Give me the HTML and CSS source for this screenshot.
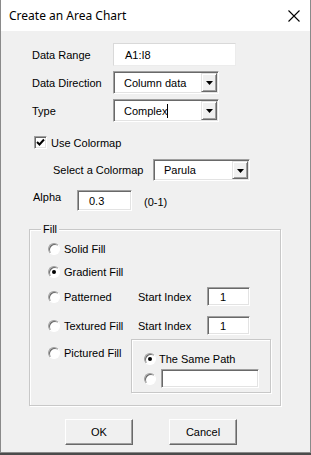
FILE: index.html
```html
<!DOCTYPE html>
<html lang="en">
<head>
    <meta charset="UTF-8">
    <title>Create an Area Chart</title>
    <link rel="stylesheet" href="styles.css">
</head>
<body>
    <div class="window">
        <div class="titlebar">
            <span class="title">Create an Area Chart</span>
            <svg class="close" width="12" height="12" viewBox="0 0 12 12">
                <path d="M0.5 0.5 L11.5 11.5 M11.5 0.5 L0.5 11.5" stroke="#000" stroke-width="1.1" fill="none"/>
            </svg>
        </div>

        <div class="row first">
            <span class="lbl">Data Range</span>
            <div class="edit flat range">A1:I8</div>
        </div>
        <div class="row gap5">
            <span class="lbl">Data Direction</span>
            <div class="combo dir">
                <span class="combo-text">Column data</span>
                <span class="drop"><svg width="7" height="4" viewBox="0 0 7 4"><polygon points="0,0 7,0 3.5,4" fill="#000"/></svg></span>
            </div>
        </div>
        <div class="row gap5">
            <span class="lbl">Type</span>
            <div class="combo dir">
                <span class="combo-text">Complex<span class="caret"></span></span>
                <span class="drop"><svg width="7" height="4" viewBox="0 0 7 4"><polygon points="0,0 7,0 3.5,4" fill="#000"/></svg></span>
            </div>
        </div>

        <div class="check-row">
            <span class="checkbox">
                <svg width="9" height="9" viewBox="0 0 9 9"><path d="M1 4 L3.5 6.5 L8 1.5" stroke="#000" stroke-width="2" fill="none"/></svg>
            </span>
            <span>Use Colormap</span>
        </div>

        <div class="cmap-row">
            <span class="cmap-lbl">Select a Colormap</span>
            <div class="combo cmap">
                <span class="combo-text">Parula</span>
                <span class="drop"><svg width="7" height="4" viewBox="0 0 7 4"><polygon points="0,0 7,0 3.5,4" fill="#000"/></svg></span>
            </div>
        </div>

        <div class="alpha-row">
            <span class="alpha-lbl">Alpha</span>
            <div class="edit alpha">0.3</div>
            <span class="hint">(0-1)</span>
        </div>

        <div class="group">
            <span class="legend">Fill</span>
            <div class="opt">
                <span class="radio"></span><span class="opt-text">Solid Fill</span>
            </div>
            <div class="opt mt5">
                <span class="radio on"></span><span class="opt-text">Gradient Fill</span>
            </div>
            <div class="opt tall mt6">
                <span class="opt-main"><span class="radio"></span><span class="opt-text">Patterned</span></span>
                <span class="idx-lbl">Start Index</span>
                <div class="edit idx">1</div>
            </div>
            <div class="opt tall mt10">
                <span class="opt-main"><span class="radio"></span><span class="opt-text">Textured Fill</span></span>
                <span class="idx-lbl">Start Index</span>
                <div class="edit idx">1</div>
            </div>
            <div class="opt-pic">
                <span class="pic-main"><span class="radio"></span><span class="opt-text">Pictured Fill</span></span>
                <div class="subgroup">
                    <div class="sub-opt">
                        <span class="radio on"></span><span class="sub-text">The Same Path</span>
                    </div>
                    <div class="sub-opt path">
                        <span class="radio"></span>
                        <div class="edit path-edit"></div>
                    </div>
                </div>
            </div>
        </div>

        <div class="buttons">
            <div class="button">OK</div>
            <div class="button">Cancel</div>
        </div>
    </div>
</body>
</html>
```

FILE: styles.css
```css
* {
    box-sizing: border-box;
}
body {
    margin: 0;
    background: #4b4b4b;
    font-family: 'Liberation Sans', Arial, sans-serif;
    font-size: 11px;
    color: #000;
}
.window {
    width: 311px;
    height: 453px;
    background: #f0f0f0;
    border: 1px solid #8a8a8a;
    border-top: none;
}
.titlebar {
    height: 31px;
    background: #fff;
    display: flex;
    align-items: center;
    justify-content: space-between;
    padding: 0 10px 0 8px;
}
.title {
    font-family: 'Noto Sans', sans-serif;
    font-size: 12px;
    color: #000;
}

/* form rows */
.row {
    display: flex;
    align-items: center;
    height: 23px;
    padding-left: 31px;
}
.row.first { margin-top: 12px; }
.row.gap5 { margin-top: 5px; }
.lbl { width: 81px; }

.edit {
    height: 23px;
    background: #fff;
    border: 1px solid;
    border-color: #a0a0a0 #fff #fff #a0a0a0;
    box-shadow: inset 1px 1px 0 #696969, inset -1px -1px 0 #e3e3e3;
    padding-left: 11px;
    display: flex;
    align-items: center;
}
.edit.flat {
    border-color: #d9d9d9 #ececec #ececec #d9d9d9;
    box-shadow: none;
}
.range { width: 123px; }

.combo {
    height: 23px;
    background: #fff;
    border: 1px solid;
    border-color: #a0a0a0 #fff #fff #a0a0a0;
    box-shadow: inset 1px 1px 0 #696969, inset -1px -1px 0 #e3e3e3;
    display: flex;
    align-items: stretch;
    padding: 1px 1px 1px 10px;
}
.combo-text {
    flex: 1;
    display: flex;
    align-items: center;
}
.dir { width: 106px; }
.caret {
    display: inline-block;
    width: 1px;
    height: 14px;
    background: #000;
}
.drop {
    width: 16px;
    background: #f0f0f0;
    border: 1px solid;
    border-color: #e3e3e3 #696969 #696969 #e3e3e3;
    box-shadow: inset 1px 1px 0 #fff, inset -1px -1px 0 #a0a0a0;
    display: flex;
    align-items: center;
    justify-content: center;
}
.drop svg { margin-top: 1px; }

.check-row {
    display: flex;
    align-items: center;
    height: 13px;
    margin-top: 14px;
    padding-left: 33px;
}
.checkbox {
    width: 13px;
    height: 13px;
    background: #fff;
    border: 1px solid;
    border-color: #a0a0a0 #fff #fff #a0a0a0;
    box-shadow: inset 1px 1px 0 #696969, inset -1px -1px 0 #e3e3e3;
    display: flex;
    align-items: center;
    justify-content: center;
    margin-right: 4px;
}

.cmap-row {
    display: flex;
    align-items: center;
    height: 22px;
    margin-top: 10px;
    padding-left: 52px;
}
.cmap-lbl { width: 100px; }
.cmap {
    width: 97px;
    height: 22px;
}

.alpha-row {
    display: flex;
    align-items: flex-start;
    height: 21px;
    margin-top: 9px;
    padding-left: 32px;
}
.alpha-lbl {
    width: 44px;
    padding-top: 1px;
}
.alpha {
    width: 55px;
    height: 21px;
}
.hint {
    margin-left: 12px;
    padding-top: 6px;
}

/* fill group */
.group {
    position: relative;
    width: 252px;
    height: 177px;
    margin: 18px 0 0 28px;
    border: 1px solid #c8c8c8;
    box-shadow: inset 1px 1px 0 #fff, 1px 1px 0 #fff;
    padding: 10px 0 0 18px;
}
.legend {
    position: absolute;
    top: -8px;
    left: 11px;
    line-height: 14px;
    padding: 0 2px;
    background: #f0f0f0;
}
.opt {
    display: flex;
    align-items: center;
    height: 18px;
}
.opt.tall { height: 19px; }
.mt5 { margin-top: 5px; }
.mt6 { margin-top: 6px; }
.mt10 { margin-top: 10px; }
.opt-main {
    display: flex;
    align-items: center;
    width: 90px;
}
.opt-text { margin-left: 4px; }
.idx-lbl { width: 69px; }
.idx {
    width: 43px;
    height: 19px;
    padding-left: 12px;
}

.radio {
    width: 12px;
    height: 12px;
    flex: none;
    border-radius: 50%;
    background: #fff;
    border: 1px solid;
    border-color: #a0a0a0 #fff #fff #a0a0a0;
    box-shadow: inset 1px 1px 0 #696969;
    display: flex;
    align-items: center;
    justify-content: center;
}
.radio.on::after {
    content: '';
    width: 4px;
    height: 4px;
    border-radius: 50%;
    background: #000;
}

.opt-pic {
    display: flex;
    align-items: flex-start;
    margin-top: 4px;
}
.pic-main {
    display: flex;
    align-items: center;
    width: 83px;
    height: 12px;
    margin-top: 8px;
}
.subgroup {
    width: 140px;
    height: 54px;
    border: 1px solid #c8c8c8;
    box-shadow: inset 1px 1px 0 #fff, 1px 1px 0 #fff;
    padding: 13px 0 0 12px;
}
.sub-opt {
    display: flex;
    align-items: center;
    height: 12px;
}
.sub-text { margin-left: 3px; }
.sub-opt.path {
    height: 19px;
    margin-top: 4px;
}
.path-edit {
    width: 98px;
    height: 19px;
    margin-left: 5px;
}

/* dialog buttons */
.buttons {
    display: flex;
    gap: 36px;
    margin-top: 13px;
    padding-left: 64px;
}
.button {
    width: 68px;
    height: 26px;
    background: #f0f0f0;
    border: 1px solid;
    border-color: #fff #696969 #696969 #fff;
    box-shadow: inset -1px -1px 0 #a0a0a0;
    display: flex;
    align-items: center;
    justify-content: center;
}
```
